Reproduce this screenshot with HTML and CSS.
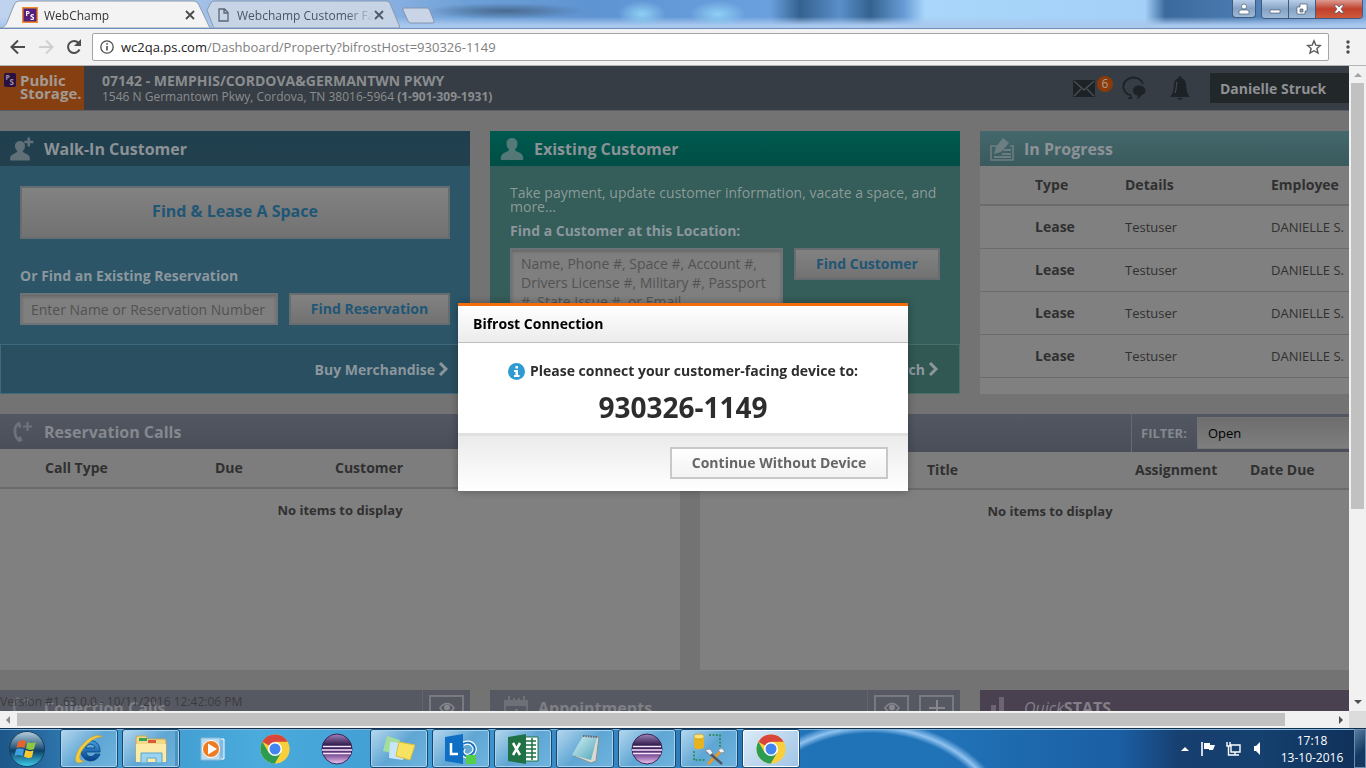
FILE: index.html
```html
<!DOCTYPE html>
<html lang="en">
<head>
<meta charset="utf-8">
<title>WebChamp</title>
<link rel="stylesheet" href="styles.css">
</head>
<body>
<svg class="defs" aria-hidden="true">
  <defs>
    <linearGradient id="gOrb" x1="0" y1="0" x2="0" y2="1"><stop offset="0" stop-color="#b9cfdd"/><stop offset=".45" stop-color="#2f5f82"/><stop offset=".55" stop-color="#0d3f66"/><stop offset="1" stop-color="#3fd0ee"/></linearGradient>
    <linearGradient id="gEcl" x1="0" y1="0" x2="0" y2="1"><stop offset="0" stop-color="#a184ba"/><stop offset=".4" stop-color="#2b1646"/><stop offset=".65" stop-color="#6c3f8b"/><stop offset="1" stop-color="#f0c8f2"/></linearGradient>
    <linearGradient id="gIe" x1="0" y1="0" x2="0" y2="1"><stop offset="0" stop-color="#3f9fe0"/><stop offset="1" stop-color="#073f88"/></linearGradient>
    <linearGradient id="gNote" x1="0" y1="0" x2="1" y2="1"><stop offset="0" stop-color="#d8f3f6"/><stop offset="1" stop-color="#4fa5b8"/></linearGradient>
    <symbol id="person" viewBox="0 0 24 24"><path d="M12 1c-3.600 0-5.500 2.600-5.500 5.700 0 2.300 1 4.300 2.500 5.500-.2 1.400-1.200 2-3 2.900C2.500 16.500 1 18 .7 21.500c0 1 .5 1.500 1.500 1.500h19.600c1 0 1.500-.5 1.500-1.500C23 18 21.500 16.500 18 15.100c-1.800-.9-2.800-1.500-3-2.900 1.500-1.200 2.500-3.200 2.500-5.500C17.500 3.600 15.600 1 12 1z"/></symbol>
    <symbol id="eye" viewBox="0 0 16 12"><path d="M1 6c4-6 10-6 14 0-4 6-10 6-14 0z" fill="none" stroke="currentColor" stroke-width="1.500"/><circle cx="8" cy="5.500" r="3"/></symbol>
    <symbol id="chevron" viewBox="0 0 10 14"><path d="M2 1l6 6-6 6" fill="none" stroke="currentColor" stroke-width="3"/></symbol>
    <symbol id="chrome" viewBox="0 0 30 30"><circle cx="15" cy="15" r="14.500" fill="#f9cf3c"/><path d="M15 15L2.400 7.800A14.500 14.500 0 0 1 27.600 7.800H15z" fill="#d9453a"/><path d="M2.400 7.800A14.500 14.500 0 0 0 15 29.500l6.200-10.800L15 15 8.800 18.700z" fill="#2c9c50"/><path d="M15 8h12.600A14.500 14.500 0 0 1 15 29.500l6.200-10.900z" fill="#f9cf3c"/><circle cx="15" cy="15" r="7" fill="#fff"/><circle cx="15" cy="15" r="5.500" fill="#4284f0"/></symbol>
    <symbol id="eclipse" viewBox="0 0 32 32"><circle cx="16" cy="16" r="15" fill="url(#gEcl)" stroke="#3b2456"/><path d="M2 13.500h28M1 17h30M2 20.500h28" stroke="#f3e6fa" stroke-width="1.300"/></symbol>
  </defs>
</svg>

<header class="titlebar">
  <nav class="tabs" aria-label="Tabs">
    <div class="tab tab-active">
      <svg class="tab-shape" viewBox="0 0 212 28" preserveAspectRatio="none"><path d="M0 28C5 27 6 25 8 20L14 5Q16 1 19 1H194Q197 1 199 5L208 24Q209 28 212 28z" fill="#f3f3f3" stroke="#8c9bb0"/></svg>
      <svg class="favicon" viewBox="0 0 16 16"><path d="M0 0h16v16H0z" fill="#f08a2c"/><path d="M1.500 1.500h13v13h-13z" fill="#54207c"/><g fill="#fff" font-family="Open Sans, sans-serif" font-weight="700"><text x="3.500" y="8.500" font-size="7">P</text><text x="8" y="13" font-size="8">S</text></g></svg>
      <span class="tab-name">WebChamp</span>
      <button class="tab-close" aria-label="Close tab"><svg viewBox="0 0 10 10"><path d="M1 1l8 8M9 1l-8 8" stroke="#4a4a4a" stroke-width="1.800"/></svg></button>
    </div>
    <div class="tab tab-back">
      <svg class="tab-shape" viewBox="0 0 200 28" preserveAspectRatio="none"><path d="M8 28L1 10 5 3Q6 1 9 1H186Q189 1 190 4L199 25Q200 28 200 28z" fill="#c6d4e6" stroke="#8597b3"/></svg>
      <svg class="doc" viewBox="0 0 11 14"><path d="M1 1h5.500L10 4.500V13H1zM6 1v4h4" fill="none" stroke="#5c6674" stroke-width="1.300"/></svg>
      <span class="tab-name">Webchamp Customer Fa</span>
      <button class="tab-close" aria-label="Close tab"><svg viewBox="0 0 10 10"><path d="M1 1l8 8M9 1l-8 8" stroke="#4f5866" stroke-width="1.800"/></svg></button>
    </div>
    <button class="new-tab" aria-label="New tab"><svg viewBox="0 0 34 17"><path d="M1 1h24q2 0 3 3l4 10q1 2-2 2H9q-2 0-3-2L1 3z" fill="#c9d5e6" stroke="#8294ae"/></svg></button>
  </nav>
  <div class="win-buttons">
    <button class="wb wb-user" aria-label="User"><svg viewBox="0 0 12 12"><circle cx="6" cy="3.500" r="2.500"/><path d="M1 11V9q0-2 2-2h6q2 0 2 2v2z"/></svg></button>
    <div class="wb-group">
      <button class="wb" aria-label="Minimize"><svg viewBox="0 0 12 12"><path d="M1 7h10v3H1z"/></svg></button>
      <button class="wb" aria-label="Restore"><svg viewBox="0 0 12 12"><path d="M4 1h7v7H9v3H1V4h3z"/><path d="M4 6h3v3H4z" fill="#8aa4c2"/></svg></button>
      <button class="wb wb-close" aria-label="Close"><svg viewBox="0 0 12 12"><path d="M1 2h3l2 2 2-2h3L8 6l3 4H8L6 8l-2 2H1l3-4z"/></svg></button>
    </div>
  </div>
</header>

<div class="toolbar">
  <button class="nav" aria-label="Back"><svg viewBox="0 0 16 16"><path d="M15 8H2M8 1.500L1.500 8 8 14.500" fill="none" stroke="#4c4c4c" stroke-width="2"/></svg></button>
  <button class="nav" aria-label="Forward"><svg viewBox="0 0 16 16"><path d="M1 8h13M8 1.500L14.500 8 8 14.500" fill="none" stroke="#cfcfcf" stroke-width="2"/></svg></button>
  <button class="nav" aria-label="Reload"><svg viewBox="0 0 16 16"><path d="M13.500 10.500A6 6 0 1 1 12.500 4" fill="none" stroke="#4c4c4c" stroke-width="2"/><path d="M15 0v7H8z" fill="#4c4c4c"/></svg></button>
  <div class="address">
    <svg class="info" viewBox="0 0 14 14"><circle cx="7" cy="7" r="6.200" fill="none" stroke="#4c4c4c" stroke-width="1.300"/><path d="M7 6v4.500M7 3.300v1.500" stroke="#4c4c4c" stroke-width="1.600"/></svg>
    <span class="url">wc2qa.ps.com<span class="path">/Dashboard/Property?bifrostHost=930326-1149</span></span>
    <svg class="star" viewBox="0 0 16 16"><path d="M8 1.800l1.800 4.300 4.600.4-3.500 3 1.100 4.600L8 11.700l-4 2.400 1.100-4.600-3.500-3 4.600-.4z" fill="none" stroke="#5a5a5a" stroke-width="1.400"/></svg>
  </div>
  <button class="menu" aria-label="Menu"><svg viewBox="0 0 4 14"><circle cx="2" cy="2" r="1.700"/><circle cx="2" cy="7" r="1.700"/><circle cx="2" cy="12" r="1.700"/></svg></button>
</div>

<div class="view">
  <main class="page">
    <div class="site-head">
      <div class="logo">
        <svg viewBox="0 0 12 14"><rect width="12" height="14" rx="2" fill="#2a1040"/><g fill="#9f94a4" font-family="Open Sans, sans-serif" font-weight="700"><text x="1.500" y="7" font-size="7">P</text><text x="5.500" y="12" font-size="8">S</text></g></svg>
        <span>Public<br>Storage.</span>
      </div>
      <div class="site">
        <strong class="site-name">07142 - MEMPHIS/CORDOVA&amp;GERMANTWN PKWY</strong>
        <span class="site-addr">1546 N Germantown Pkwy, Cordova, TN 38016-5964 <b>(1-901-309-1931)</b></span>
      </div>
      <div class="head-icons">
        <span class="mail"><svg viewBox="0 0 22 17"><path d="M0 0h22v17H0z"/><path d="M1 1l10 9L21 1M1 16l7-7M21 16l-7-7" fill="none" stroke="#4a5056" stroke-width="1.400"/></svg><span class="count">6</span></span>
        <svg class="chat" viewBox="0 0 24 24"><path d="M8 19A10 9 0 1 1 21 8" fill="none" stroke="#1d2226" stroke-width="1.800"/><path d="M8 17v3.500L5.500 23h5M17 9.500c-3.600 0-6 2.200-6 4.900 0 2.600 2 4.600 4.500 5 .8.600.6 2-1 3.300 2.500-.2 4-1.500 4.500-3.500 3-.6 4.500-2.500 4.500-4.800 0-2.700-2.900-4.900-6.500-4.900z" fill="#1d2226"/></svg>
        <svg class="bell" viewBox="0 0 20 24"><path d="M10 0c1 0 1.500.8 1.500 2C15 3 16 6 16.300 11c.2 4 .7 6.500 3.700 10H0c3-3.500 3.500-6 3.700-10C4 6 5 3 8.500 2 8.500.8 9 0 10 0zM7.500 22h5c-.5 2.300-4.500 2.300-5 0z"/><path d="M7 6c-1 3-.5 8-2 11" fill="none" stroke="#4a5056"/></svg>
      </div>
      <button class="user">Danielle Struck</button>
    </div>

    <div class="board">
      <div class="row row-top">
        <section class="card walkin">
          <h2 class="card-head"><svg class="hicon" viewBox="0 0 24 24"><path d="M10 4c-3 0-5 2.300-5 5 0 2 1 4 2.300 5-.2 1.300-1 1.600-2.800 2.400C1.500 17.500.3 19 0 22q0 1.500 1.500 1.500h17q1.500 0 1.500-1.500c-.3-3-1.500-4.500-4.500-5.600-1.800-.8-2.600-1.100-2.800-2.400C14 13 15 11 15 9c0-2.700-2-5-5-5z"/><path d="M18.800.5v9M14.300 5h9" stroke="currentColor" stroke-width="2.600"/></svg>Walk-In Customer</h2>
          <div class="card-body">
            <button class="btn btn-big">Find &amp; Lease A Space</button>
            <label class="label" for="resv">Or Find an Existing Reservation</label>
            <div class="form-row"><input class="field" id="resv" placeholder="Enter Name or Reservation Number"><button class="btn btn-resv">Find Reservation</button></div>
          </div>
          <div class="card-foot"><a href="#">Buy Merchandise<svg class="chev"><use href="#chevron"/></svg></a></div>
        </section>
        <section class="card existing">
          <h2 class="card-head"><svg class="hicon"><use href="#person"/></svg>Existing Customer</h2>
          <div class="card-body">
            <p class="lead">Take payment, update customer information, vacate a space, and more...</p>
            <label class="label" for="cust">Find a Customer at this Location:</label>
            <div class="form-row"><textarea class="field" id="cust" placeholder="Name, Phone #, Space #, Account #, Drivers License #, Military #, Passport #, State Issue #, or Email"></textarea><button class="btn btn-cust">Find Customer</button></div>
          </div>
          <div class="card-foot"><a href="#">Search<svg class="chev"><use href="#chevron"/></svg></a></div>
        </section>
        <section class="card progress">
          <h2 class="card-head"><svg class="hicon" viewBox="0 0 24 24"><path d="M8 9H1v14h22V9h-3" fill="none" stroke="currentColor" stroke-width="1.600"/><path d="M13 1l6 5-8 9-7 2 2-7zM14 12h7v2h-8zM12 16h9v2h-9zM4 19h17v2H4z"/></svg>In Progress</h2>
          <table class="grid">
            <thead><tr><th class="c-sel"></th><th class="c-type">Type</th><th class="c-det">Details</th><th>Employee</th></tr></thead>
            <tbody>
              <tr><td></td><td><b>Lease</b></td><td>Testuser</td><td>DANIELLE S.</td></tr>
              <tr><td></td><td><b>Lease</b></td><td>Testuser</td><td>DANIELLE S.</td></tr>
              <tr><td></td><td><b>Lease</b></td><td>Testuser</td><td>DANIELLE S.</td></tr>
              <tr><td></td><td><b>Lease</b></td><td>Testuser</td><td>DANIELLE S.</td></tr>
            </tbody>
          </table>
        </section>
      </div>

      <div class="row row-mid">
        <section class="card slate">
          <h2 class="card-head"><svg class="hicon" viewBox="0 0 24 24"><path d="M9 3.500C3 6 4 18 10 21" fill="none" stroke="currentColor" stroke-width="2.600"/><path d="M7 3l3-1 1.500 5L9 8zM8 17l3-.5 1.500 4-3 1.500z"/><path d="M17.500 2v9M13 6.500h9" stroke="currentColor" stroke-width="2.200"/></svg>Reservation Calls</h2>
          <table class="grid calls"><thead><tr><th class="c-45"></th><th class="c-170">Call Type</th><th class="c-120">Due</th><th>Customer</th></tr></thead></table>
          <p class="empty">No items to display</p>
        </section>
        <section class="card slate">
          <div class="card-head head-filter"><div class="filter"><label for="flt">FILTER:</label><select id="flt"><option>Open</option></select></div></div>
          <table class="grid tasks"><thead><tr><th class="c-227"></th><th class="c-208">Title</th><th class="c-115">Assignment</th><th>Date Due</th></tr></thead></table>
          <p class="empty">No items to display</p>
        </section>
      </div>

      <div class="row row-low">
        <section class="card low">
          <h2 class="card-head"><svg class="hicon" viewBox="0 0 24 24"><path d="M9 2C2 5 3 19 10 21" fill="none" stroke="currentColor" stroke-width="3"/><path d="M13 4h8M15 9l6-5" stroke="currentColor" stroke-width="2"/></svg>Collection Calls<span class="tools"><button aria-label="View"><svg class="eye"><use href="#eye"/></svg></button></span></h2>
        </section>
        <section class="card low">
          <h2 class="card-head appts"><svg class="hicon" viewBox="0 0 24 24"><path d="M1 5h22v18H1z" fill="none" stroke="currentColor" stroke-width="2"/><path d="M1 5h22v5H1z"/><path d="M5 0v7M10 2v5M15 2v5M20 0v7" stroke="currentColor" stroke-width="2"/><path d="M11 13h3v7h-3z"/></svg>Appointments<span class="tools"><button aria-label="View"><svg class="eye"><use href="#eye"/></svg></button><button aria-label="Add"><svg class="plus" viewBox="0 0 16 16"><path d="M8 0v16M0 8h16" stroke="currentColor" stroke-width="2"/></svg></button></span></h2>
        </section>
        <section class="card stats">
          <h2 class="card-head"><svg class="hicon" viewBox="0 0 24 24"><path d="M1 9h5v15H1zM9 1h5v23H9zM17 18h5v6h-5z"/></svg><i>Quick</i>STATS</h2>
        </section>
      </div>
    </div>
    <span class="version">Version #1.63.0.0 - 10/11/2016 12:42:06 PM</span>
  </main>
  <div class="vscroll"><span class="arrow up"></span><span class="vthumb"></span><span class="arrow down"></span></div>
</div>
<div class="hscroll"><span class="arrow left"></span><span class="htrack"><span class="hthumb"></span></span><span class="arrow right"></span><span class="corner"></span></div>

<footer class="taskbar">
  <button class="start" aria-label="Start"><svg viewBox="0 0 38 38"><circle cx="19" cy="19" r="17.500" fill="url(#gOrb)" stroke="#16405f"/><path d="M10 12q4-3 8-.5L16.500 18Q13 16 8.500 18z" fill="#e8622c"/><path d="M19.500 12q4 2 8.500 0L26 19q-4 2-8-.5z" fill="#8dc63f"/><path d="M8 19.500q4-2 8 0L14.500 26Q11 24 6.500 26z" fill="#3f9fe0"/><path d="M17.500 20q4 2 8 .5L24 27q-4 2-8-.5z" fill="#fbc92f"/></svg></button>
  <div class="apps">
    <button class="app open" aria-label="Internet Explorer"><svg viewBox="0 0 32 32"><path d="M27 19H13c.5 5 7 6 9 2h5c-4 11-19 8-19-3C8 4 28 4 27 19zM13 15h9c-.5-5-8.500-5-9 0z" fill="url(#gIe)" stroke="#08427e" stroke-width=".8"/><path d="M30 4C22-2 6 11 3 23c-2 8 3 8 8 5-4 0-5-2-4-6C10 12 24 2 30 4z" fill="#f4cb3e" stroke="#c99a20" stroke-width=".5"/></svg></button>
    <button class="app open stack" aria-label="Explorer"><svg viewBox="0 0 32 32"><path d="M1 5q0-2 2-2h8l2 3h16q2 0 2 2v20H1z" fill="#f2d98a" stroke="#c9a64c"/><path d="M4 5h8v3H4z" fill="#37a35a"/><path d="M13 7h8v3h-8z" fill="#d65a3c"/><path d="M1 11h30v18H1z" fill="#fbeaa8"/><path d="M6 30V20h21v10h-6v-5h-9v5z" fill="#9bd4ee" stroke="#5ba8cc"/></svg></button>
    <button class="app" aria-label="Media Player"><svg viewBox="0 0 32 32"><path d="M12 6h15v20H12z" fill="#7fbbe2" stroke="#fff"/><path d="M4 5h19v22H4z" fill="#b8dcf0" stroke="#88b9d8"/><circle cx="14" cy="16" r="8.500" fill="#ee7b20" stroke="#fff"/><path d="M11 10.500l9 5.500-9 5.500z" fill="#fff"/></svg></button>
    <button class="app" aria-label="Chrome"><svg class="round"><use href="#chrome"/></svg></button>
    <button class="app" aria-label="Eclipse"><svg><use href="#eclipse"/></svg></button>
    <button class="app open" aria-label="Sticky Notes"><svg viewBox="0 0 32 32"><path d="M4 3l13 4-5 14-12-3z" fill="#a4dd9e"/><path d="M7 9l15 1-2 17-14-2z" fill="#c8e6fa"/><path d="M16 9l16 3-5 15-14-4z" fill="#f7e262" stroke="#d9bf3b"/></svg></button>
    <button class="app open" aria-label="Lync"><svg viewBox="0 0 32 32"><path d="M18 11c8-5 16 5 9 10s-12-1-8-6" fill="none" stroke="#fff" stroke-width="4.500"/><path d="M18 11c8-5 16 5 9 10s-12-1-8-6" fill="none" stroke="#1774c2" stroke-width="2"/><path d="M0 4l18-3v30L0 28z" fill="#0e6fc4"/><path d="M6 10v11h7" fill="none" stroke="#fff" stroke-width="2.500"/><path d="M21 22h10v9H21z" fill="#54cf4b"/></svg></button>
    <button class="app open" aria-label="Excel"><svg viewBox="0 0 32 32"><path d="M17 4h14v24H17z" fill="#fff" stroke="#1e7245"/><path d="M19 8h10M19 12h10M19 16h10M19 20h10M19 24h10M25 5v22" stroke="#1e7245" stroke-width="1.500"/><path d="M1 4l18-3v30L1 28z" fill="#1e7245"/><path d="M6 10l7 12M13 10L6 22" stroke="#fff" stroke-width="2.500"/></svg></button>
    <button class="app open" aria-label="Notepad"><svg viewBox="0 0 32 32"><path d="M14 3l16 1-3 24-5 2-17-7z" fill="#d9d9cf" stroke="#82919a"/><path d="M14 3l14 1-6 23L3 22z" fill="url(#gNote)"/><path d="M14 3l14 1" stroke="#667" stroke-width="2" stroke-dasharray="1.500 1"/></svg></button>
    <button class="app open" aria-label="Eclipse"><svg><use href="#eclipse"/></svg></button>
    <button class="app open" aria-label="Database tools"><svg viewBox="0 0 32 32"><path d="M1 4v10c1 3 9 3 10 0V4z" fill="#e8b321"/><ellipse cx="6" cy="3.500" rx="5" ry="2.500" fill="#fae27c" stroke="#b98a10" stroke-width=".6"/><path d="M16 2h11v12M1 18v9h11" fill="none" stroke="#1b8a42" stroke-width="1.500" stroke-dasharray="2 1.500"/><path d="M15 31l13-13" stroke="#e49a2c" stroke-width="3"/><path d="M14 18l15 13" stroke="#53575c" stroke-width="2.500"/><path d="M12 17l5-1 3 4-3 2zM25 17l4-2 3 4-4 1z" fill="#eef1f4" stroke="#777" stroke-width=".6"/></svg></button>
    <button class="app open current" aria-label="Chrome"><svg class="round"><use href="#chrome"/></svg></button>
  </div>
  <div class="tray">
    <svg class="t-up" viewBox="0 0 8 4"><path d="M0 4l4-4 4 4z"/></svg>
    <svg class="t-icon" viewBox="0 0 15 15"><path d="M1 1v14" stroke="#fff" stroke-width="1.600"/><path d="M3 2h6v2h5l-2 5H8V8H3z"/></svg>
    <svg class="t-icon" viewBox="0 0 15 15"><path d="M5 4h9v7H5zM9 11v3M5 14h8M1 1v4h3V1M2.500 5v9H5" fill="none" stroke="#fff" stroke-width="1.400"/></svg>
    <svg class="t-icon" viewBox="0 0 15 15"><path d="M3 5h2l4-4v13L5 10H3z"/></svg>
  </div>
  <div class="clock"><span>17:18</span><span>13-10-2016</span></div>
  <button class="show-desktop" aria-label="Show desktop"></button>
</footer>

<div class="overlay">
  <div class="dialog" role="dialog" aria-labelledby="dlg-title">
    <h1 class="dlg-head" id="dlg-title">Bifrost Connection</h1>
    <div class="dlg-body">
      <p class="dlg-msg"><svg viewBox="0 0 17 17"><circle cx="8.500" cy="8.500" r="8.500" fill="#2e9bd2"/><path d="M7.500 3h2.500v2.500H7.500zM6 7h4v5h1.500v2H6v-2h1.500V9H6z" fill="#fff"/></svg>Please connect your customer-facing device to:</p>
      <p class="dlg-code">930326-1149</p>
    </div>
    <div class="dlg-foot"><button class="dlg-btn">Continue Without Device</button></div>
  </div>
</div>
</body>
</html>
```
FILE: styles.css
```css
* { box-sizing: border-box; }
html, body { height: 100%; }
body { margin: 0; display: flex; flex-direction: column; overflow: hidden; font-family: "Open Sans", "Noto Sans", sans-serif; font-size: 14px; }
h1, h2, p { margin: 0; }
button { font-family: inherit; padding: 0; border: 0; background: none; }
svg { flex: none; }
.defs { position: absolute; width: 0; height: 0; }

/* browser window */
.titlebar { flex: none; height: 28px; display: flex; justify-content: space-between; align-items: flex-start;
  background:
    radial-gradient(ellipse 24px 13px at 642px 14px, #8fd0f5, transparent),
    radial-gradient(ellipse 28px 13px at 718px 14px, #8fd0f5, transparent),
    radial-gradient(ellipse 80px 8px at 505px 11px, #48698f, transparent),
    linear-gradient(to bottom, transparent 60%, #a9c8ee 90%),
    linear-gradient(to right, #c0d3ee 0, #86aee0 400px, #6c9fd6 470px, #5f94d2 590px, #6ba0de 770px, #34628f 800px, #5a8fc8 840px, #34628f 870px, #6a9ed8 905px, #a9d6fa 925px, #a4d0f8 1145px, #3b6b9d 1165px, #4a7ab0 1240px, #7ba5d8 100%); }
.tabs { display: flex; align-items: stretch; height: 28px; }
.tab { position: relative; display: flex; align-items: center; height: 28px; font-size: 12px; color: #333; }
.tab-active { width: 206px; padding: 2px 11px 0 22px; z-index: 1; }
.tab-back { width: 194px; padding: 2px 8px 0 12px; color: #4c5564; }
.tab-shape { position: absolute; left: 0; top: 0; width: 100%; height: 28px; }
.tab-active .tab-shape { width: 212px; }
.favicon { position: relative; width: 16px; height: 16px; margin-right: 6px; }
.doc { position: relative; width: 11px; height: 14px; margin-right: 8px; }
.tab-name { position: relative; flex: 1; white-space: nowrap; overflow: hidden; }
.tab-back .tab-name { -webkit-mask-image: linear-gradient(to right, #000 80%, transparent); mask-image: linear-gradient(to right, #000 80%, transparent); }
.tab-close { position: relative; display: flex; width: 10px; height: 10px; }
.tab-close svg { width: 10px; height: 10px; }
.tab-back .tab-close { margin-right: 8px; }
.new-tab { display: flex; padding-top: 7px; margin-left: 2px; }
.new-tab svg { width: 34px; height: 17px; }
.win-buttons { display: flex; gap: 5px; padding-right: 3px; }
.wb { display: flex; align-items: center; justify-content: center; width: 27px; height: 18px; background: linear-gradient(#b9cfe9, #86a3c5 50%, #9db9d8); border-right: 1px solid #3f5c80; }
.wb svg { width: 12px; height: 12px; fill: #fff; stroke: #3a4a60; stroke-width: .6; }
.wb-user { width: 24px; border: 1px solid #3f5c80; border-top: 0; border-radius: 0 0 4px 4px; }
.wb-group { display: flex; border: 1px solid #3f5c80; border-top: 0; border-radius: 0 0 4px 4px; overflow: hidden; }
.wb-close { width: 46px; border: 0; background: linear-gradient(#dc9a90, #c0402c 50%, #cf5a3c); }

.toolbar { flex: none; height: 38px; display: flex; align-items: center; padding: 0 16px 0 10px; gap: 12px; background: #f2f2f2; border-top: 1px solid #6f8fba; border-bottom: 1px solid #b4b4b4; }
.nav { display: flex; width: 16px; height: 16px; }
.nav svg { width: 16px; height: 16px; }
.address { flex: 1; display: flex; align-items: center; height: 28px; padding: 0 6px 0 7px; background: #fff; border: 1px solid #a5a5a5; border-radius: 2px; font-size: 13px; color: #222; margin-right: 5px; margin-left: -2px; }
.info { width: 14px; height: 14px; margin-right: 7px; }
.url { flex: 1; }
.path { color: #808080; }
.star { width: 16px; height: 16px; }
.menu { display: flex; width: 4px; height: 14px; }
.menu svg { width: 4px; height: 14px; fill: #4c4c4c; }

.view { flex: 1; min-height: 0; display: flex; }
.page { position: relative; flex: 1; min-width: 0; overflow: hidden; background: #737373; }
.vscroll { flex: none; width: 17px; background: #f1f1f1; display: flex; flex-direction: column; align-items: center; }
.vthumb { width: 13px; flex: 0 0 66%; background: #c1c1c1; }
.arrow { flex: none; border: 4px solid transparent; width: 0; height: 0; }
.up { border-top: 0; border-bottom-color: #a3a3a3; margin: 7px 0 6px; }
.down { border-bottom: 0; border-top-color: #505050; margin: auto 0 7px; }
.hscroll { flex: none; height: 17px; display: flex; align-items: center; background: #f1f1f1; }
.left { border-left: 0; border-right-color: #8a8a8a; margin: 0 7px 0 6px; }
.right { border-right: 0; border-left-color: #505050; margin: 0 6px 0 7px; }
.htrack { flex: 1; height: 13px; }
.hthumb { display: block; width: 96.400%; height: 13px; background: #c1c1c1; }
.corner { width: 17px; height: 17px; background: #dcdcdc; }

/* site header */
.site-head { display: flex; align-items: center; height: 45px; background: #373d44; border-bottom: 1px solid #5c6064; color: #8a8d90; }
.logo { align-self: stretch; width: 84px; display: flex; gap: 4px; padding: 7px 0 0 4px; background: #863f11; color: #a39a93; font: bold 15px/13px "Open Sans", sans-serif; }
.logo svg { width: 12px; height: 14px; }
.logo span { margin-top: 1px; }
.site { flex: 1; padding-left: 18px; display: flex; flex-direction: column; }
.site-name { font-size: 14px; line-height: 17px; }
.site-addr { font-size: 12px; line-height: 15px; }
.head-icons { display: flex; align-items: center; gap: 24px; padding-right: 20px; fill: #1d2226; }
.mail { position: relative; display: flex; }
.mail svg { width: 22px; height: 17px; }
.count { position: absolute; left: 24px; top: -4px; width: 16px; height: 16px; border-radius: 8px; background: #8c3a08; color: #a9a09b; font-size: 12px; line-height: 16px; text-align: center; }
.chat { width: 24px; height: 24px; margin-left: 3px; }
.bell { width: 20px; height: 24px; }
.user { width: 139px; height: 30px; padding-left: 10px; background: #22272a; color: #8f9193; font-size: 14px; font-weight: 700; text-align: left; }

/* dashboard */
.board { min-width: 1400px; padding-top: 20px; display: flex; flex-direction: column; gap: 20px; }
.row { display: grid; gap: 20px; }
.row-top, .row-low { grid-template-columns: 470px 470px 1fr; }
.row-mid { grid-template-columns: 680px 1fr; }
.card { display: flex; flex-direction: column; background: #808080; }
.row-top .card { min-height: 263px; }
.row-mid .card { min-height: 256px; }
.card-head { flex: none; display: flex; align-items: center; height: 35px; padding-left: 10px; color: #8c9296; fill: currentColor; font-size: 16px; line-height: 24px; font-weight: 700; }
.hicon { width: 24px; height: 24px; margin-right: 10px; opacity: .6; }
.card-body { flex: 1; display: flex; flex-direction: column; padding: 20px 20px 19px; }
.card-foot { flex: none; display: flex; align-items: center; justify-content: flex-end; height: 50px; padding-right: 21px; border: 1px solid #3d6a7e; font-weight: 700; }
.card-foot a { display: flex; align-items: center; gap: 3px; color: #8b979d; text-decoration: none; }
.chev { width: 10px; height: 14px; color: #8b979d; }
.walkin { background: #2c5568; }
.walkin .card-head { background: linear-gradient(#20404f, #223f4d); }
.walkin .card-foot { background: #2a4f61; }
.existing { background: #355d59; }
.existing .card-head { background: linear-gradient(#005a4f, #004e45); }
.existing .card-foot { background: #325854; border-color: #487069; }
.progress .card-head { background: linear-gradient(#44686c, #3a5a5d); }
.slate .card-head { background: linear-gradient(#525762, #494e59); color: #85888e; }
.low .card-head { background: #575962; color: #7e8086; }
.appts .hicon { margin: 0 10px 0 4px; }
.stats .card-head { background: #4a4150; color: #837e87; }
.stats i { font-weight: 400; }

.btn { height: 32px; padding-bottom: 2px; background: linear-gradient(#828282, #727272); border: 2px solid #666d70; color: #1f5675; font-size: 14px; font-weight: 700; }
.btn-big { flex: none; height: 53px; padding-bottom: 4px; font-size: 16px; }
.btn-resv { width: 161px; }
.btn-cust { width: 146px; }
.label { color: #8b979d; font-weight: 700; line-height: 20px; }
.walkin .label { margin: 27px 0 7px; }
.existing .label { margin: 7px 0; }
.lead { color: #8b9b98; line-height: 14px; }
.form-row { display: flex; align-items: flex-start; gap: 11px; }
.field { flex: 1; min-width: 0; height: 32px; margin: 0; padding: 0 9px; border: 2px solid #6d7376; border-radius: 0; background: #7f7f7f; box-shadow: inset 0 2px 3px #686868; font: 14px/19px "Open Sans", sans-serif; resize: none; }
.field::placeholder { color: #525252; opacity: 1; }
textarea.field { height: 62px; padding-top: 4px; overflow: hidden; }

.grid { width: 100%; table-layout: fixed; border-collapse: collapse; color: #303030; font-size: 13px; }
.grid th { height: 39px; padding: 0; border-bottom: 2px solid #6b6b6b; background: #7d7d7d; text-align: left; font-size: 14px; line-height: 20px; }
.grid td { height: 43px; padding: 0; border-bottom: 1px solid #6b6b6b; line-height: 20px; }
.grid b { font-size: 14px; }
.tasks th { height: 37px; }
.c-sel { width: 55px; }
.c-type { width: 90px; }
.c-det { width: 146px; }
.c-45 { width: 45px; }
.c-170 { width: 170px; }
.c-120 { width: 120px; }
.c-227 { width: 227px; }
.c-208 { width: 208px; }
.c-115 { width: 115px; }
.empty { padding-top: 11px; text-align: center; color: #303030; font-weight: 700; line-height: 20px; font-size: 13px; }
.head-filter { height: 38px; justify-content: flex-end; }
.filter { display: flex; align-items: center; align-self: stretch; gap: 10px; width: 269px; padding-left: 9px; border-left: 1px solid #656a74; font-size: 13px; }
.filter select { flex: 1; height: 32px; padding: 0 10px; border: 1px solid #747474; border-radius: 0; background: linear-gradient(#6e6e6e, #7e7e7e); color: #000; font: 13px "Open Sans", sans-serif; appearance: none; }
.tools { align-self: stretch; margin-left: auto; display: flex; gap: 10px; padding: 5px 6px 0; border-left: 1px solid #63656d; }
.tools button { width: 35px; height: 26px; display: flex; align-items: center; justify-content: center; border: 2px solid #787a80; color: #85878c; fill: currentColor; }
.eye { width: 16px; height: 12px; }
.plus { width: 16px; height: 16px; }
.version { position: absolute; left: 0; bottom: 0; color: #3a3b40; font-size: 12px; line-height: 18px; }

/* taskbar */
.taskbar { flex: none; height: 40px; display: flex; align-items: stretch; border-top: 1px solid #12304c; box-shadow: inset 0 1px 0 #7fb4de;
  background:
    radial-gradient(ellipse 140px 115px at 871px 110px, transparent 92%, #8fc2f0 97%, transparent 103%),
    linear-gradient(to right, #1d5688 0, #2a6fa6 50px, #3f97cb 120px, #4aabdc 260px, #3f98d0 450px, #347fbd 650px, #2173b8 810px, #2173b8 940px, #1b5ea3 1120px, #173f70 1180px, #15406f 1260px, #0f2f58 100%); }
.start { width: 60px; padding-left: 8px; display: flex; align-items: center; }
.start svg { width: 38px; height: 38px; }
.apps { flex: 1; display: flex; gap: 4px; }
.app { width: 58px; display: flex; align-items: center; justify-content: center; }
.app svg { width: 32px; height: 32px; }
.app .round { width: 30px; height: 30px; }
.open { border: 1px solid #164a72; border-radius: 3px; box-shadow: inset 0 0 0 1px #a8d2ee; background: linear-gradient(135deg, #b5d7ee, #5fa6d4 50%, #6eb4de); }
.stack { box-shadow: inset 0 0 0 1px #a8d2ee, inset -4px 0 0 #4d93bf; }
.current { background: linear-gradient(135deg, #dcebf8, #9fc3e4); box-shadow: inset 0 0 0 1px #fff; }
.tray { display: flex; align-items: center; gap: 10px; padding-right: 8px; fill: #fff; }
.t-up { width: 8px; height: 4px; margin-right: 2px; }
.t-icon { width: 15px; height: 15px; }
.clock { width: 76px; margin-right: 4px; display: flex; flex-direction: column; justify-content: center; align-items: center; color: #fff; font-size: 12px; line-height: 17px; }
.show-desktop { width: 12px; border: 1px solid #6d8cab; background: linear-gradient(135deg, #577da4, #143a63 60%); }

/* dialog */
.overlay { position: fixed; inset: 0; display: flex; justify-content: center; align-items: flex-start; padding-top: 303px; }
.dialog { width: 450px; background: #fff; border-top: 3px solid #f26c0c; box-shadow: 0 0 8px rgba(0, 0, 0, .3); }
.dlg-head { height: 37px; padding: 0 15px; border-bottom: 1px solid #bdbdbd; background: linear-gradient(#fff, #ebebeb); color: #000; font-size: 14px; line-height: 36px; font-weight: 700; }
.dlg-body { padding: 18px 0 8px; text-align: center; color: #2d2d2d; font-weight: 700; }
.dlg-msg { display: flex; justify-content: center; align-items: center; gap: 5px; font-size: 14px; line-height: 20px; }
.dlg-msg svg { width: 17px; height: 17px; }
.dlg-code { padding-top: 8px; font-size: 28px; line-height: 36px; }
.dlg-foot { display: flex; justify-content: flex-end; padding: 11px 20px 12px; border-top: 3px solid #e0e0e0; background: linear-gradient(#ebebeb, #fff); }
.dlg-btn { width: 218px; height: 32px; padding-bottom: 2px; border: 2px solid #c8c8c8; background: linear-gradient(#fff, #f2f2f2); color: #666; font-size: 14px; font-weight: 700; }
```
